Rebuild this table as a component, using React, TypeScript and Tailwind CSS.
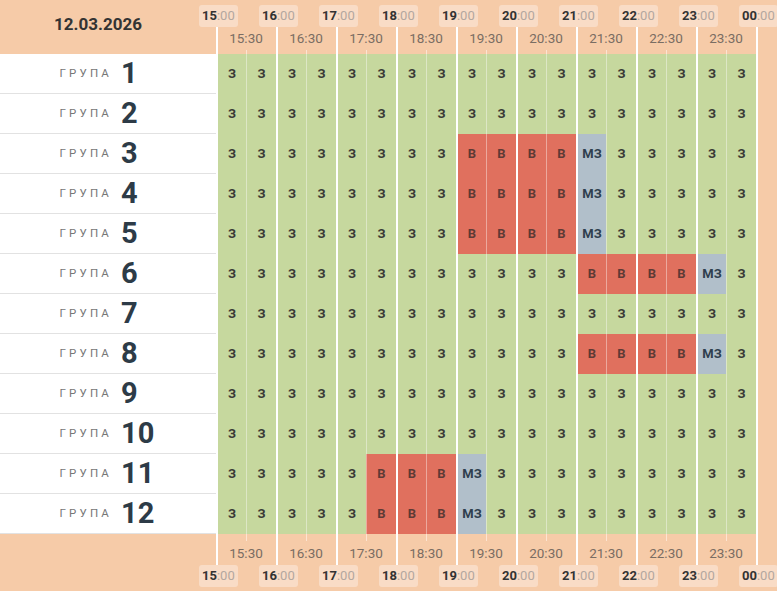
import React from "react";

const hours = ["15", "16", "17", "18", "19", "20", "21", "22", "23"];

type Kind = "З" | "В" | "МЗ";

// which half-hour slots are busy for each group
const busy: Record<number, { from: number; to: number; mz: number }> = {
  3: { from: 8, to: 11, mz: 12 },
  4: { from: 8, to: 11, mz: 12 },
  5: { from: 8, to: 11, mz: 12 },
  6: { from: 12, to: 15, mz: 16 },
  8: { from: 12, to: 15, mz: 16 },
  11: { from: 5, to: 7, mz: 8 },
  12: { from: 5, to: 7, mz: 8 },
};

const kindOf = (group: number, slot: number): Kind => {
  const b = busy[group];
  if (!b) return "З";
  if (slot >= b.from && slot <= b.to) return "В";
  if (slot === b.mz) return "МЗ";
  return "З";
};

const kindStyle: Record<Kind, string> = {
  З: "bg-[#c6d89e] text-[#3a3a36]",
  В: "bg-[#e0705e] text-[#5e3a35]",
  МЗ: "bg-[#b1bfca] text-[#2f3f4e]",
};

const HourBadge: React.FC<{ hour: string }> = ({ hour }) => (
  <span className="-ml-[17px] shrink-0 h-[22px] px-[3px] rounded-[3px] bg-[#f9dcc6] text-[13px] leading-[22px] whitespace-nowrap">
    <span className="font-bold text-[#333]">{hour}</span>
    <span className="text-[#b3a79e]">:00</span>
  </span>
);

const HeaderCol: React.FC<{ hour: string; last?: boolean }> = ({ hour, last }) => (
  <div className={"flex flex-col " + (last ? "w-[21px]" : "w-[60px]")}>
    <div className="h-[27px] pt-[5px] flex">
      <HourBadge hour={hour} />
    </div>
    <div className="flex flex-1">
      <div className="w-[2px] bg-white" />
      {!last && (
        <div className="flex-1 -ml-[2px] flex flex-col items-center">
          <span className="mt-[3px] text-[13.5px] leading-[16px] text-[#7a6d63]">{hour}:30</span>
          <div className="w-px flex-1 mt-[4px] bg-[#fce4d2]" />
        </div>
      )}
    </div>
  </div>
);

const FooterCol: React.FC<{ hour: string; last?: boolean }> = ({ hour, last }) => (
  <div className={"flex flex-col " + (last ? "w-[21px]" : "w-[60px]")}>
    <div className="flex h-[31px]">
      <div className="w-[2px] bg-white" />
      {!last && (
        <div className="flex-1 -ml-[2px] flex flex-col items-center">
          <div className="w-px h-[7px] bg-[#fce4d2]" />
          <span className="mt-[4px] text-[13.5px] leading-[16px] text-[#7a6d63]">{hour}:30</span>
        </div>
      )}
    </div>
    <div className="flex">
      <HourBadge hour={hour} />
    </div>
  </div>
);

const groups = Array.from({ length: 12 }, (_, i) => i + 1);
const slots = Array.from({ length: 18 }, (_, i) => i);

export default function App() {
  return (
    <div className="w-[777px] h-[591px] overflow-hidden bg-[#f6cba8] font-[Roboto,sans-serif]">
      {/* Header */}
      <div className="flex h-[54px]">
        <div className="w-[216px] shrink-0 flex justify-center pt-[13px] pr-[20px] text-[17px] leading-[22px] font-bold text-[#333]">
          12.03.2026
        </div>
        {hours.map((h) => (
          <HeaderCol key={h} hour={h} />
        ))}
        <HeaderCol hour="00" last />
      </div>

      {/* Rows */}
      {groups.map((g) => (
        <div key={g} className="flex h-[40px]">
          <div className="w-[216px] shrink-0 bg-white border-b border-[#e2e2e2] flex items-center">
            <span className="w-[112px] text-right text-[11.5px] tracking-[3.2px] text-[#777]">ГРУПА</span>
            <span className="ml-[9px] text-[29px] leading-none font-bold text-[#2d3b47]">{g}</span>
          </div>
          {slots.map((s) => {
            const k = kindOf(g, s);
            return (
              <div
                key={s}
                className={
                  "w-[30px] shrink-0 flex items-center justify-center text-[13px] font-bold " +
                  (s % 2 === 0 ? "border-l-2 border-white " : "border-l border-white/40 ") +
                  kindStyle[k]
                }
              >
                {k}
              </div>
            );
          })}
          <div className="w-[2px] bg-white" />
        </div>
      ))}

      {/* Footer */}
      <div className="flex h-[57px]">
        <div className="w-[216px] shrink-0" />
        {hours.map((h) => (
          <FooterCol key={h} hour={h} />
        ))}
        <FooterCol hour="00" last />
      </div>
    </div>
  );
}
